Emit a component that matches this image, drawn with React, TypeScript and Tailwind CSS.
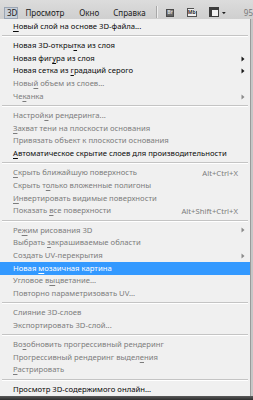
import React from "react";

type Item = {
  t: string;
  u?: number;
  d?: boolean;
  k?: string;
  s?: boolean;
  h?: boolean;
};

const SEP = null;

const items: (Item | null)[] = [
  { t: "Новый слой на основе 3D-файла...", u: 0 },
  SEP,
  { t: "Новая 3D-открытка из слоя", u: 14 },
  { t: "Новая фигура из слоя", u: 9, s: true },
  { t: "Новая сетка из градаций серого", u: 15, s: true },
  { t: "Новый объем из слоев...", u: 4, d: true },
  { t: "Чеканка", u: 2, d: true, s: true },
  SEP,
  { t: "Настройки рендеринга...", u: 7, d: true },
  { t: "Захват тени на плоскости основания", u: 0, d: true },
  { t: "Привязать объект к плоскости основания", d: true },
  { t: "Автоматическое скрытие слоев для производительности", u: 0 },
  SEP,
  { t: "Скрыть ближайшую поверхность", u: 0, d: true, k: "Alt+Ctrl+X" },
  { t: "Скрыть только вложенные полигоны", u: 8, d: true },
  { t: "Инвертировать видимые поверхности", u: 0, d: true },
  { t: "Показать все поверхности", u: 9, d: true, k: "Alt+Shift+Ctrl+X" },
  SEP,
  { t: "Режим рисования 3D", u: 2, d: true, s: true },
  { t: "Выбрать закрашиваемые области", u: 8, d: true },
  { t: "Создать UV-перекрытия", d: true, s: true },
  { t: "Новая мозаичная картина", u: 6, d: true, h: true },
  { t: "Угловое выцветание...", u: 9, d: true },
  { t: "Повторно параметризовать UV...", d: true },
  SEP,
  { t: "Слияние 3D-слоев", d: true },
  { t: "Экспортировать 3D-слой...", d: true },
  SEP,
  { t: "Возобновить прогрессивный рендеринг", u: 2, d: true },
  { t: "Прогрессивный рендеринг выделения", u: 29, d: true },
  { t: "Растрировать", u: 0, d: true },
  SEP,
  { t: "Просмотр 3D-содержимого онлайн..." },
];

function Label({ t, u }: { t: string; u?: number }) {
  if (u === undefined) return <span>{t}</span>;
  return (
    <span>
      {t.slice(0, u)}
      <span className="underline underline-offset-[1.5px] decoration-[0.8px]">{t[u]}</span>
      {t.slice(u + 1)}
    </span>
  );
}

function Arrow({ color }: { color: string }) {
  return (
    <svg width="4" height="6" viewBox="0 0 4 6" className="absolute right-[5px] top-[3.5px]">
      <path d="M0.5 0.5 L3.5 3 L0.5 5.5 Z" fill={color} />
    </svg>
  );
}

function Row({ it }: { it: Item }) {
  const color = it.h ? "text-white" : it.d ? "text-[#7c7c7c]" : "text-[#0a0a0a]";
  return (
    <div
      className={`relative h-[12.7px] flex items-center pl-[13px] whitespace-nowrap ${color} ${
        it.h ? "bg-[#3399ff]" : ""
      }`}
    >
      <Label t={it.t} u={it.u} />
      {it.k && <span className="absolute right-[12px] top-0 leading-[12.7px]">{it.k}</span>}
      {it.s && <Arrow color={it.d ? "#8a8a8a" : "#1a1a1a"} />}
    </div>
  );
}

function Separator() {
  return (
    <div className="h-[6.5px] flex flex-col justify-center px-[2px]">
      <div className="h-px bg-[#c4c4c4]" />
      <div className="h-px bg-white" />
    </div>
  );
}

export default function App() {
  return (
    <div
      className="w-[253px] h-[400px] overflow-hidden bg-[#bdbdbd] flex flex-col text-[7.7px]"
      style={{ fontFamily: '"Noto Sans", "DejaVu Sans", sans-serif' }}
    >
      {/* menu bar */}
      <div className="h-[19px] shrink-0 flex items-center bg-gradient-to-b from-[#dcdcdc] to-[#cfcfcf] text-[#1a1a1a] text-[8px] relative">
        <div className="ml-[4px] mt-[7px] h-[12px] w-[16px] pl-[2px] flex items-center bg-[#c8cfd8] border border-[#9aa5b4]">
          3D
        </div>
        <div className="ml-[7px] mt-[6px]">Просмотр</div>
        <div className="ml-[15px] mt-[6px]">Окно</div>
        <div className="ml-[14px] mt-[6px]">Справка</div>
        <div className="ml-[10px] mt-[5px] w-px h-[12px] bg-[#a8a8a8] shadow-[1px_0_0_#eeeeee]" />
        {/* Br */}
        <div className="ml-[10px] mt-[6px] w-[9px] h-[8px] bg-gradient-to-b from-[#8a8a8a] to-[#5e5e5e] border border-[#4a4a4a] flex items-center justify-center">
          <span className="text-[4.5px] leading-none text-[#d8d8d8] font-bold">Br</span>
        </div>
        {/* Mb */}
        <div className="ml-[13px] mt-[6px] relative w-[13px] h-[9px] bg-[#efefef] border border-[#505050] flex items-center justify-center">
          <span className="text-[5px] leading-none text-[#333] font-bold">Mb</span>
          <div className="absolute -top-[1px] -right-[1px] w-[3px] h-[3px] bg-[#d4d4d4]" />
        </div>
        {/* screen mode */}
        <div className="ml-[12px] mt-[5px] w-[13px] h-[10px] border border-[#3c3c3c] bg-[#f2f2f2] flex flex-col">
          <div className="h-[2px] bg-[#3c3c3c]" />
          <div className="flex-1 flex">
            <div className="w-[2px] bg-[#3c3c3c]" />
          </div>
        </div>
        <svg width="5" height="4" viewBox="0 0 5 4" className="ml-[3px] mt-[6px]">
          <path d="M0 0.5 H5 L2.5 3.5 Z" fill="#222" />
        </svg>
        <div className="ml-[18px] mt-[6px] text-[#777]">95</div>
      </div>

      {/* menu panel */}
      <div className="flex flex-1 min-h-0">
        <div className="w-[251px] shrink-0 bg-[#f0f0f0] border-r border-[#9a9a9a] pt-[1.35px] flex flex-col">
          {items.map((it, i) => (it ? <Row key={i} it={it} /> : <Separator key={i} />))}
          <div className="flex-1" />
        </div>
        <div className="flex-1 bg-[#c6c6c6]" />
      </div>
      <div className="h-[4px] shrink-0 bg-gradient-to-b from-[#5a5a5a] to-[#2e2e2e]" />
    </div>
  );
}
